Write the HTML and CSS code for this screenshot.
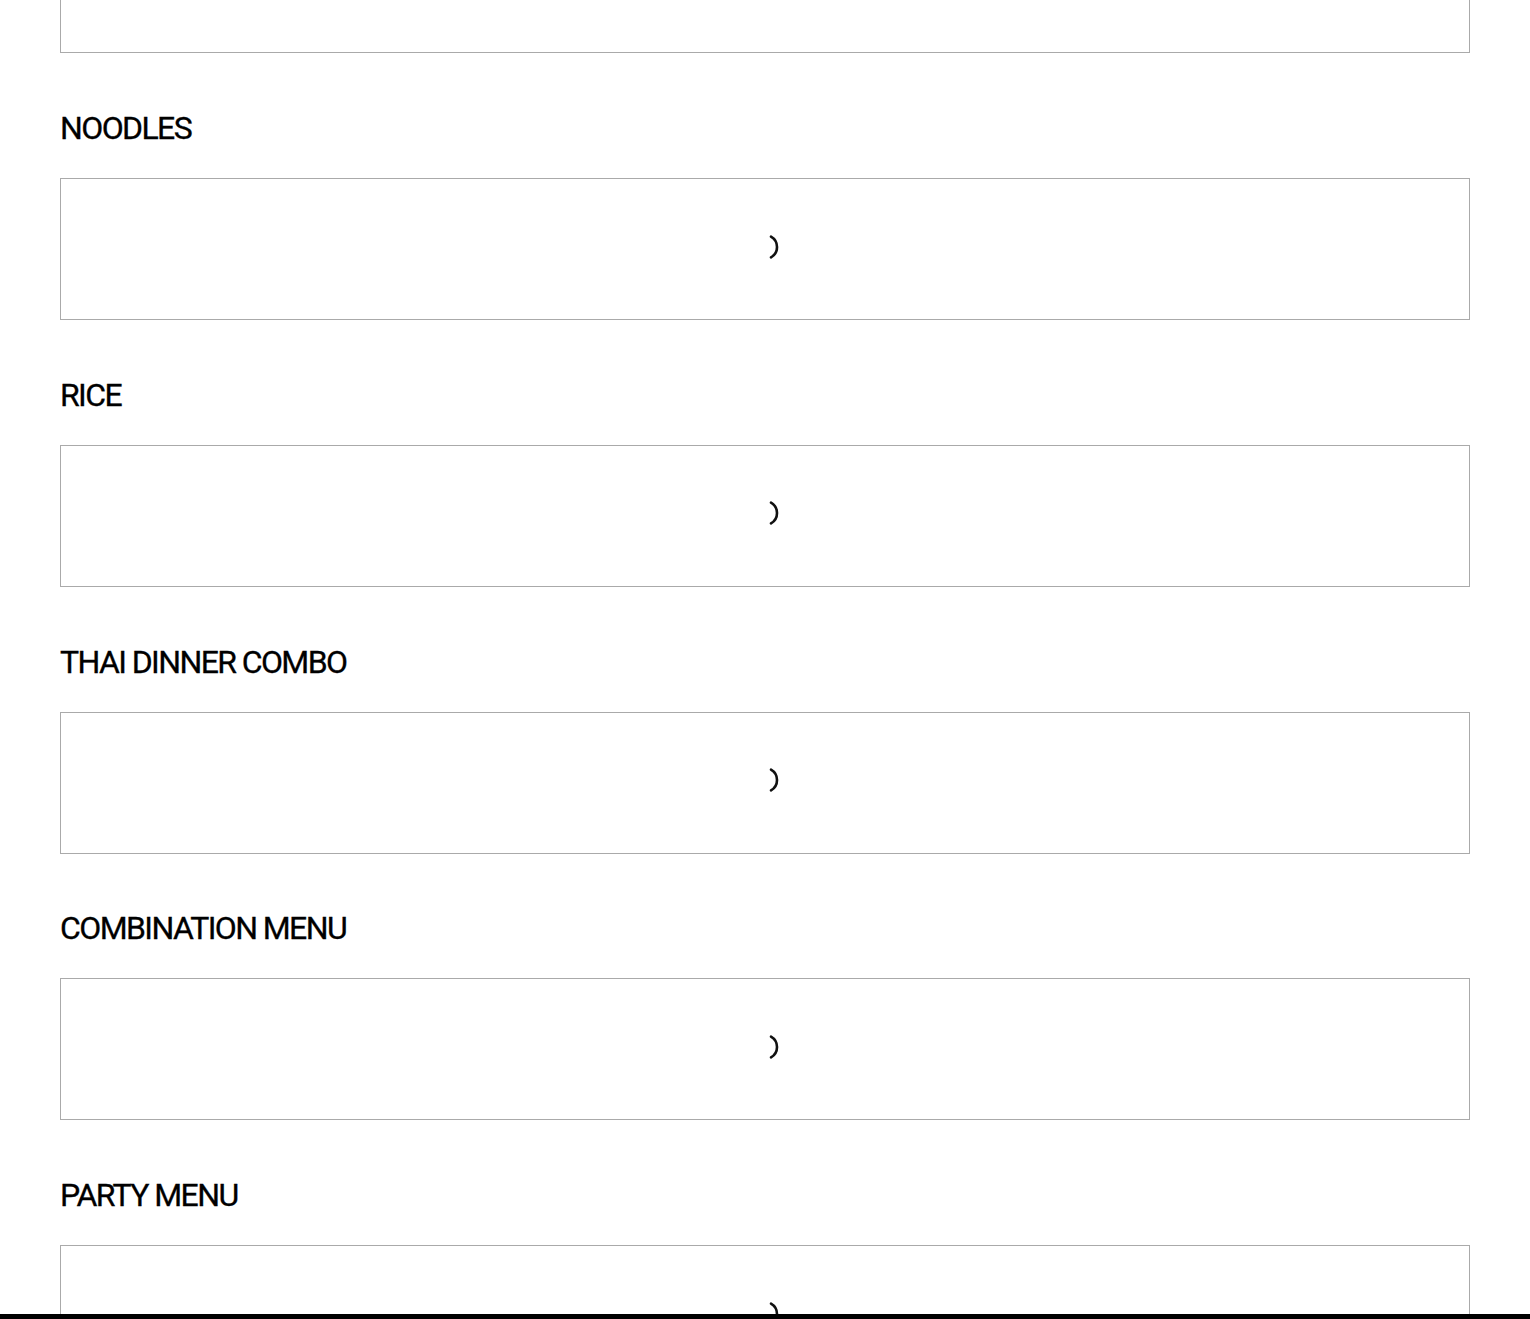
FILE: index.html
```html
<!DOCTYPE html>
<html lang="en">
<head>
<meta charset="utf-8">
<title>Menu</title>
<link rel="stylesheet" href="styles.css">
</head>
<body>
<main class="menu">
  <section class="category category-first">
    <div class="panel">
      <svg class="spinner" viewBox="0 0 28 28" width="28" height="28" aria-hidden="true"><path d="M20 3.6 A12 12 0 0 1 20 24.4" fill="none" stroke="#111" stroke-width="2.6" stroke-linecap="round"/></svg>
    </div>
  </section>
  <section class="category">
    <h2 class="category-title">NOODLES</h2>
    <div class="panel">
      <svg class="spinner" viewBox="0 0 28 28" width="28" height="28" aria-hidden="true"><path d="M20 3.6 A12 12 0 0 1 20 24.4" fill="none" stroke="#111" stroke-width="2.6" stroke-linecap="round"/></svg>
    </div>
  </section>
  <section class="category">
    <h2 class="category-title">RICE</h2>
    <div class="panel">
      <svg class="spinner" viewBox="0 0 28 28" width="28" height="28" aria-hidden="true"><path d="M20 3.6 A12 12 0 0 1 20 24.4" fill="none" stroke="#111" stroke-width="2.6" stroke-linecap="round"/></svg>
    </div>
  </section>
  <section class="category">
    <h2 class="category-title">THAI DINNER COMBO</h2>
    <div class="panel">
      <svg class="spinner" viewBox="0 0 28 28" width="28" height="28" aria-hidden="true"><path d="M20 3.6 A12 12 0 0 1 20 24.4" fill="none" stroke="#111" stroke-width="2.6" stroke-linecap="round"/></svg>
    </div>
  </section>
  <section class="category">
    <h2 class="category-title">COMBINATION MENU</h2>
    <div class="panel">
      <svg class="spinner" viewBox="0 0 28 28" width="28" height="28" aria-hidden="true"><path d="M20 3.6 A12 12 0 0 1 20 24.4" fill="none" stroke="#111" stroke-width="2.6" stroke-linecap="round"/></svg>
    </div>
  </section>
  <section class="category">
    <h2 class="category-title">PARTY MENU</h2>
    <div class="panel">
      <svg class="spinner" viewBox="0 0 28 28" width="28" height="28" aria-hidden="true"><path d="M20 3.6 A12 12 0 0 1 20 24.4" fill="none" stroke="#111" stroke-width="2.6" stroke-linecap="round"/></svg>
    </div>
  </section>
</main>
<div class="bottom-bar"></div>
</body>
</html>
```
FILE: styles.css
```css
* { box-sizing: border-box; }
html, body { margin: 0; padding: 0; background: #fff; }
body {
  font-family: Roboto, "Liberation Sans", Arial, sans-serif;
  color: #000;
}
.menu {
  padding: 0 60px;
  display: flex;
  flex-direction: column;
}
.category { display: flex; flex-direction: column; }
.category-first .panel { margin-top: -88.75px; }
.category-title {
  margin: 58.75px 0 34px;
  font-size: 32px;
  line-height: 32px;
  font-weight: 400;
  letter-spacing: -1.6px;
  -webkit-text-stroke: 0.3px #000;
}
.panel {
  height: 142px;
  border: 1px solid #aaa;
  display: flex;
  align-items: center;
  justify-content: center;
}
.spinner { display: block; margin-top: -5px; }
.bottom-bar {
  position: fixed;
  left: 0;
  right: 0;
  bottom: 0;
  height: 5px;
  background: #000;
}
```
